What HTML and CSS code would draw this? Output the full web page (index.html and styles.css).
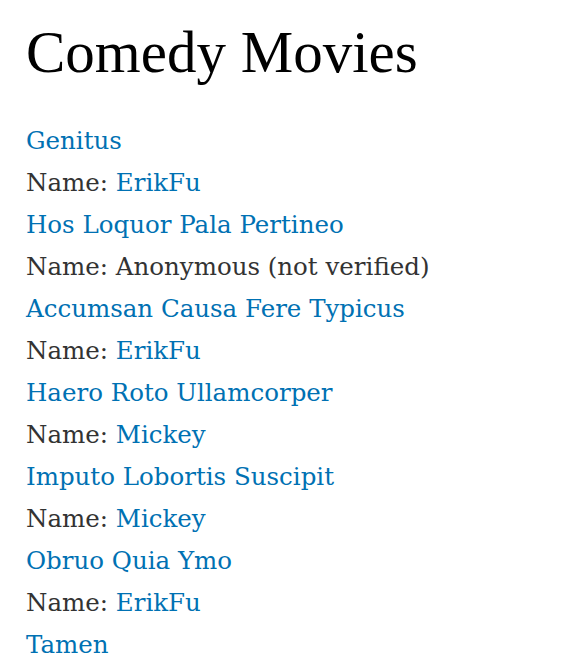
FILE: index.html
```html
<!DOCTYPE html>
<html>
<head>
<meta charset="utf-8">
<link rel="stylesheet" href="styles.css">
</head>
<body>
<h1 class="title">Comedy Movies</h1>
<div class="list">
  <div class="row"><a href="#">Genitus</a></div>
  <div class="row">Name: <a href="#">ErikFu</a></div>
  <div class="row"><a href="#">Hos Loquor Pala Pertineo</a></div>
  <div class="row">Name: Anonymous (not verified)</div>
  <div class="row"><a href="#">Accumsan Causa Fere Typicus</a></div>
  <div class="row">Name: <a href="#">ErikFu</a></div>
  <div class="row"><a href="#">Haero Roto Ullamcorper</a></div>
  <div class="row">Name: <a href="#">Mickey</a></div>
  <div class="row"><a href="#">Imputo Lobortis Suscipit</a></div>
  <div class="row">Name: <a href="#">Mickey</a></div>
  <div class="row"><a href="#">Obruo Quia Ymo</a></div>
  <div class="row">Name: <a href="#">ErikFu</a></div>
  <div class="row"><a href="#">Tamen</a></div>
</div>
</body>
</html>
```
FILE: styles.css
```css
body {
  margin: 0;
  padding: 0 26px;
  background: #fff;
}
.title {
  font-family: "Liberation Serif", serif;
  font-weight: normal;
  font-size: 59px;
  line-height: 70px;
  margin: 17px 0 33px;
  color: #000;
}
.list {
  font-family: "DejaVu Serif", serif;
  font-size: 24.5px;
  line-height: 42px;
  color: #333;
}
.row a {
  color: #0071b3;
  text-decoration: none;
}
```
